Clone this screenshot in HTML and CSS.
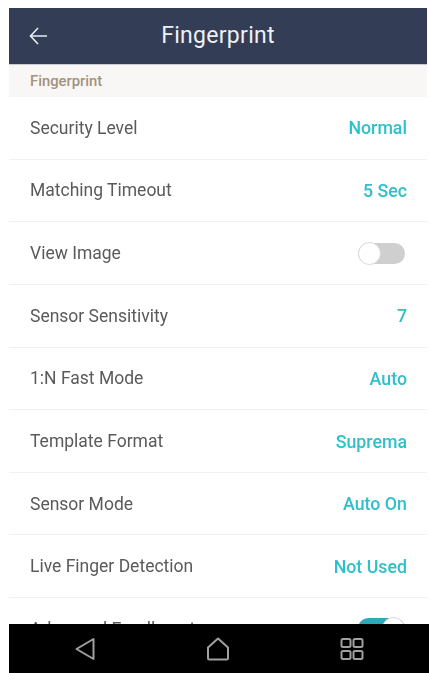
FILE: index.html
```html
<!DOCTYPE html>
<html lang="en">
<head>
<meta charset="utf-8">
<title>Fingerprint</title>
<link rel="stylesheet" href="styles.css">
</head>
<body>
<div class="app">
  <header class="header">
    <svg class="back" viewBox="0 0 18 18" width="18" height="18" fill="none" stroke="#e8ebf0" stroke-width="1.6"><path d="M18 9H1.500M9 1 1.500 9 9 17"/></svg>
    <h1 class="title">Fingerprint</h1>
  </header>
  <div class="section">Fingerprint</div>
  <main class="list">
    <div class="row"><span class="label">Security Level</span><span class="value">Normal</span></div>
    <div class="row"><span class="label">Matching Timeout</span><span class="value">5 Sec</span></div>
    <div class="row"><span class="label">View Image</span><span class="toggle"><span class="knob"></span></span></div>
    <div class="row"><span class="label">Sensor Sensitivity</span><span class="value">7</span></div>
    <div class="row"><span class="label">1:N Fast Mode</span><span class="value">Auto</span></div>
    <div class="row"><span class="label">Template Format</span><span class="value">Suprema</span></div>
    <div class="row"><span class="label">Sensor Mode</span><span class="value">Auto On</span></div>
    <div class="row"><span class="label">Live Finger Detection</span><span class="value">Not Used</span></div>
    <div class="row"><span class="label">Advanced Enrollment</span><span class="toggle on"><span class="knob"></span></span></div>
  </main>
  <nav class="nav">
    <svg viewBox="0 0 20 24" width="20" height="24" fill="none" stroke="#a0a0a0" stroke-width="2" stroke-linejoin="round"><path d="M18.500 2v20L1.500 12z"/></svg>
    <svg viewBox="0 0 24 24" width="24" height="24" fill="none" stroke="#a0a0a0" stroke-width="2" stroke-linejoin="round"><path d="M12 1.500 2 10.500V21a1.500 1.500 0 0 0 1.500 1.500h17A1.500 1.500 0 0 0 22 21V10.500z"/></svg>
    <svg viewBox="0 0 24 24" width="24" height="24" fill="none" stroke="#a0a0a0" stroke-width="2"><rect x="1.500" y="2" width="9" height="8" rx="1.500"/><rect x="13.500" y="2" width="9" height="8" rx="1.500"/><rect x="1.500" y="14" width="9" height="8" rx="1.500"/><rect x="13.500" y="14" width="9" height="8" rx="1.500"/></svg>
  </nav>
</div>
</body>
</html>
```
FILE: styles.css
```css
html, body {
  margin: 0;
  height: 100%;
  background: #fff;
}
body {
  overflow: hidden;
  font-family: Roboto, "Liberation Sans", sans-serif;
}
.app {
  box-sizing: border-box;
  height: 673px;
  padding: 8px 0 0 9px;
  display: flex;
  flex-direction: column;
  filter: blur(0.55px);
}
.header {
  flex: none;
  height: 57px;
  margin-right: 2px;
  background: #333d55;
  display: flex;
  align-items: center;
  justify-content: center;
  position: relative;
  border-bottom: 1px solid #c9ccd2;
  box-sizing: border-box;
}
.back {
  position: absolute;
  left: 20px;
  top: 19px;
}
.title {
  margin: 0 0 1px;
  font-size: 23px;
  font-weight: 400;
  letter-spacing: 0.3px;
  color: #eef0f4;
}
.section {
  flex: none;
  height: 32px;
  margin-right: 2px;
  padding-left: 21px;
  display: flex;
  align-items: center;
  background: #f8f7f5;
  font-size: 14.800px;
  font-weight: 500;
  color: #a3927c;
}
.list {
  flex: 1;
  min-height: 0;
  overflow: hidden;
  margin-right: 2px;
}
.row {
  box-sizing: border-box;
  height: 62.650px;
  padding: 0 20px 0 21px;
  display: flex;
  align-items: center;
  justify-content: space-between;
  border-bottom: 1px solid #f1f1f1;
}
.label {
  font-size: 17.500px;
  color: #5a5a5a;
}
.value {
  font-size: 17.800px;
  font-weight: 500;
  color: #2fc0cb;
}
.toggle {
  width: 47px;
  height: 21px;
  margin-right: 2px;
  border-radius: 11px;
  background: #cfcfcf;
  position: relative;
}
.toggle.on {
  background: #2fa9b8;
}
.knob {
  position: absolute;
  left: 0;
  top: -1px;
  box-sizing: border-box;
  width: 23px;
  height: 23px;
  border-radius: 50%;
  background: #fff;
  border: 1px solid #d8d8d8;
}
.toggle.on .knob {
  left: auto;
  right: 0;
}
.nav {
  flex: none;
  height: 49px;
  background: #000;
  display: flex;
  align-items: center;
  justify-content: space-between;
  padding: 0 65px 0 66px;
}
```
